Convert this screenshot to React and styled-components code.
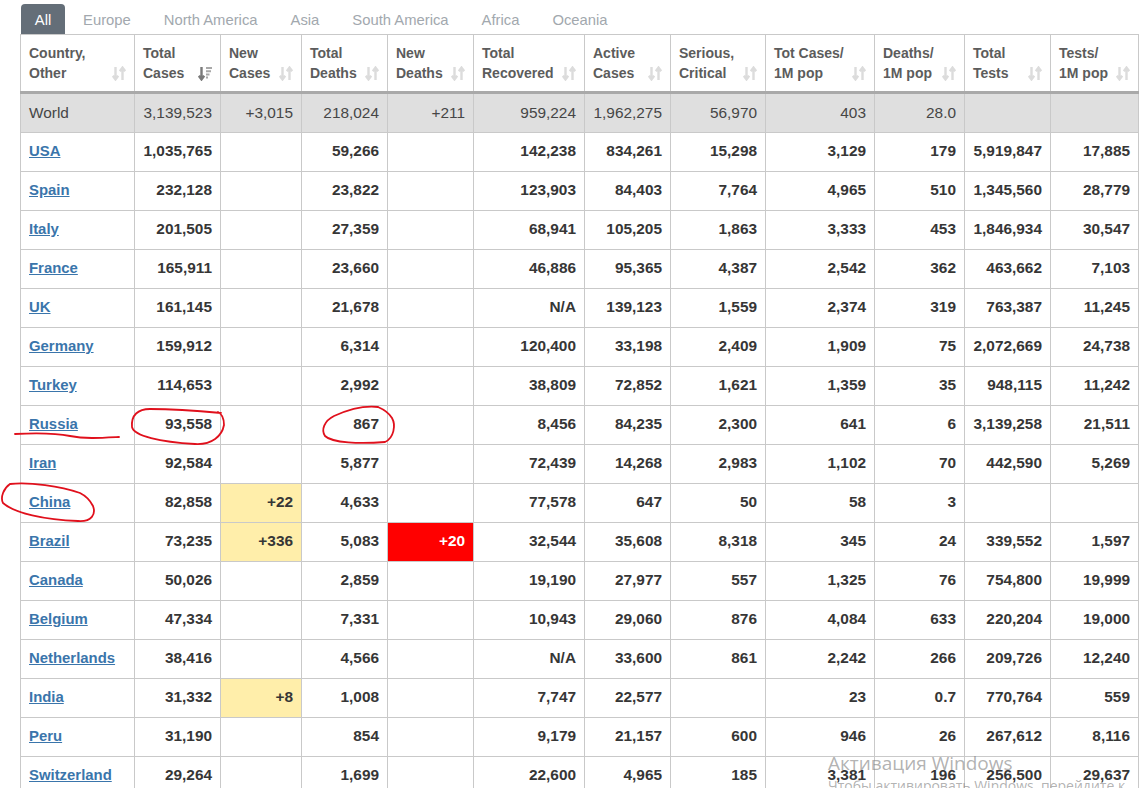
import React from 'react';
import styled, { createGlobalStyle } from 'styled-components';

const Global = createGlobalStyle`
  html, body { margin: 0; padding: 0; height: 788px; overflow: hidden; background: #fff; }
  body { font-family: "Liberation Sans", Arial, sans-serif; }
`;
const Page = styled.div`
  position: relative;
  width: 1139px;
  height: 788px;
  overflow: hidden;
  padding: 4px 0 0 20px;
  box-sizing: border-box;
`;
const Tabs = styled.nav`
  display: flex;
  height: 30px;
  padding-left: 1px;
`;
const Tab = styled.a`
  display: flex;
  align-items: center;
  height: 30px;
  box-sizing: border-box;
  padding: 1px ${p => (p.$active ? '13.8px' : '0')} 0;
  margin-right: ${p => (p.$active ? '18px' : '33px')};
  font-size: 14.8px;
  border-radius: 4px 4px 0 0;
  background: ${p => (p.$active ? '#646e78' : 'transparent')};
  color: ${p => (p.$active ? '#fff' : '#a2a8ae')};
`;
const Table = styled.table`
  table-layout: fixed;
  border-collapse: collapse;
  width: 1119px;
`;
const Head = styled.th`
  position: relative;
  height: 58px;
  box-sizing: border-box;
  padding: 0 0 0 8px;
  border: 1px solid #c9c9c9;
  border-bottom: 3px solid #a9a9a9;
  text-align: left;
  vertical-align: middle;
  font-size: 14px;
  line-height: 20px;
  font-weight: 700;
  color: #5c5c5c;
`;
const Arrows = styled.svg`
  position: absolute;
  right: 8px;
  bottom: 10px;
`;
const Row = styled.tr`
  height: ${p => (p.$world ? '40px' : '39px')};
  background: ${p => (p.$world ? '#dfdfdf' : '#fff')};
`;
const Cell = styled.td`
  box-sizing: border-box;
  padding: 0 8px ${p => (p.$world ? '0' : '2px')};
  border: 1px solid #c9c9c9;
  text-align: ${p => (p.$left ? 'left' : 'right')};
  font-size: 15.4px;
  font-weight: ${p => (p.$world ? 400 : 700)};
  color: ${p => (p.$hot ? '#fff' : p.$world ? '#464646' : '#363636')};
  background: ${p => (p.$hot ? '#ff0000' : p.$warn ? '#ffeeaa' : 'transparent')};
  white-space: nowrap;
`;
const CountryLink = styled.a`
  color: #3a75ab;
  text-decoration: underline;
  font-size: 14.9px;
  font-weight: 700;
`;
const Ink = styled.svg`
  position: absolute;
  left: 0;
  top: 0;
  pointer-events: none;
`;
const Watermark = styled.div`
  position: absolute;
  left: 828px;
  top: 750px;
  color: rgba(130, 130, 130, 0.62);
  font-family: "Open Sans", sans-serif;
`;
const WatermarkTitle = styled.div`
  font-size: 19px;
  line-height: 26px;
`;
const WatermarkText = styled.div`
  font-size: 14px;
  line-height: 19px;
  white-space: nowrap;
`;

const widths = [114, 86, 81, 86, 86, 111, 86, 95, 109, 90, 86, 88];
const heads = [
  ['Country,', 'Other'], ['Total', 'Cases'], ['New', 'Cases'], ['Total', 'Deaths'], ['New', 'Deaths'],
  ['Total', 'Recovered'], ['Active', 'Cases'], ['Serious,', 'Critical'], ['Tot Cases/', '1M pop'],
  ['Deaths/', '1M pop'], ['Total', 'Tests'], ['Tests/', '1M pop'],
];
const world = ['World', '3,139,523', '+3,015', '218,024', '+211', '959,224', '1,962,275', '56,970', '403', '28.0', '', ''];
const rows = [
  ['USA', '1,035,765', '', '59,266', '', '142,238', '834,261', '15,298', '3,129', '179', '5,919,847', '17,885'],
  ['Spain', '232,128', '', '23,822', '', '123,903', '84,403', '7,764', '4,965', '510', '1,345,560', '28,779'],
  ['Italy', '201,505', '', '27,359', '', '68,941', '105,205', '1,863', '3,333', '453', '1,846,934', '30,547'],
  ['France', '165,911', '', '23,660', '', '46,886', '95,365', '4,387', '2,542', '362', '463,662', '7,103'],
  ['UK', '161,145', '', '21,678', '', 'N/A', '139,123', '1,559', '2,374', '319', '763,387', '11,245'],
  ['Germany', '159,912', '', '6,314', '', '120,400', '33,198', '2,409', '1,909', '75', '2,072,669', '24,738'],
  ['Turkey', '114,653', '', '2,992', '', '38,809', '72,852', '1,621', '1,359', '35', '948,115', '11,242'],
  ['Russia', '93,558', '', '867', '', '8,456', '84,235', '2,300', '641', '6', '3,139,258', '21,511'],
  ['Iran', '92,584', '', '5,877', '', '72,439', '14,268', '2,983', '1,102', '70', '442,590', '5,269'],
  ['China', '82,858', '+22', '4,633', '', '77,578', '647', '50', '58', '3', '', ''],
  ['Brazil', '73,235', '+336', '5,083', '+20', '32,544', '35,608', '8,318', '345', '24', '339,552', '1,597'],
  ['Canada', '50,026', '', '2,859', '', '19,190', '27,977', '557', '1,325', '76', '754,800', '19,999'],
  ['Belgium', '47,334', '', '7,331', '', '10,943', '29,060', '876', '4,084', '633', '220,204', '19,000'],
  ['Netherlands', '38,416', '', '4,566', '', 'N/A', '33,600', '861', '2,242', '266', '209,726', '12,240'],
  ['India', '31,332', '+8', '1,008', '', '7,747', '22,577', '', '23', '0.7', '770,764', '559'],
  ['Peru', '31,190', '', '854', '', '9,179', '21,157', '600', '946', '26', '267,612', '8,116'],
  ['Switzerland', '29,264', '', '1,699', '', '22,600', '4,965', '185', '3,381', '196', '256,500', '29,637'],
];
const tabs = ['All', 'Europe', 'North America', 'Asia', 'South America', 'Africa', 'Oceania'];

function SortIcon({ active }) {
  return (
    <Arrows width="14" height="15" viewBox="0 0 14 15" fill="none">
      <path d="M3.5 1v12M.8 9.8 3.5 13.4l2.7-3.6" stroke={active ? '#7a7a7a' : '#dcdcdc'} strokeWidth="2.4" />
      {active ? (
        <path d="M8 2h6M8 5.2h5M8 8.4h3.5M8 11.4h2" stroke="#a8a8a8" strokeWidth="2" />
      ) : (
        <path d="M10.5 14V2M7.8 5.2 10.5 1.6l2.7 3.6" stroke="#dcdcdc" strokeWidth="2.4" />
      )}
    </Arrows>
  );
}

export default function App() {
  return (
    <Page>
      <Global />
      <Tabs>
        {tabs.map((t, i) => <Tab key={t} $active={i === 0}>{t}</Tab>)}
      </Tabs>
      <Table>
        <colgroup>{widths.map((w, i) => <col key={i} width={w} />)}</colgroup>
        <thead>
          <tr>
            {heads.map((h, i) => (
              <Head key={i}>{h[0]}<br />{h[1]}<SortIcon active={i === 1} /></Head>
            ))}
          </tr>
        </thead>
        <tbody>
          <Row $world>
            {world.map((v, i) => <Cell key={i} $world $left={i === 0}>{v}</Cell>)}
          </Row>
          {rows.map(r => (
            <Row key={r[0]}>
              {r.map((v, i) => (
                <Cell
                  key={i}
                  $left={i === 0}
                  $warn={i === 2 && v !== ''}
                  $hot={i === 4 && v !== ''}
                >
                  {i === 0 ? <CountryLink>{v}</CountryLink> : v}
                </Cell>
              ))}
            </Row>
          ))}
        </tbody>
      </Table>
      <Ink width="1139" height="788" viewBox="0 0 1139 788" fill="none" stroke="#e0101c" strokeWidth="1.8" strokeLinecap="round">
        <path d="M15 434C35 433 55 433 70 436C85 439 100 438 119 437" />
        <path d="M221 413C200 411 170 409 150 409C138 409 131 415 132 427C134 436 160 442 195 444C212 445 222 436 224 425C224 418 222 414 218 412" />
        <path d="M378 407C360 405 345 411 334 416C324 421 321 430 325 436C332 443 360 444 385 442C394 438 396 425 392 418C389 413 385 410 378 407" />
        <path d="M10 484C4 488 0 497 3 503C14 513 45 520 78 521C92 522 96 514 93 506C90 500 86 496 80 493C60 486 30 482 10 484" />
      </Ink>
      <Watermark>
        <WatermarkTitle>Активация Windows</WatermarkTitle>
        <WatermarkText>Чтобы активировать Windows, перейдите к</WatermarkText>
      </Watermark>
    </Page>
  );
}
